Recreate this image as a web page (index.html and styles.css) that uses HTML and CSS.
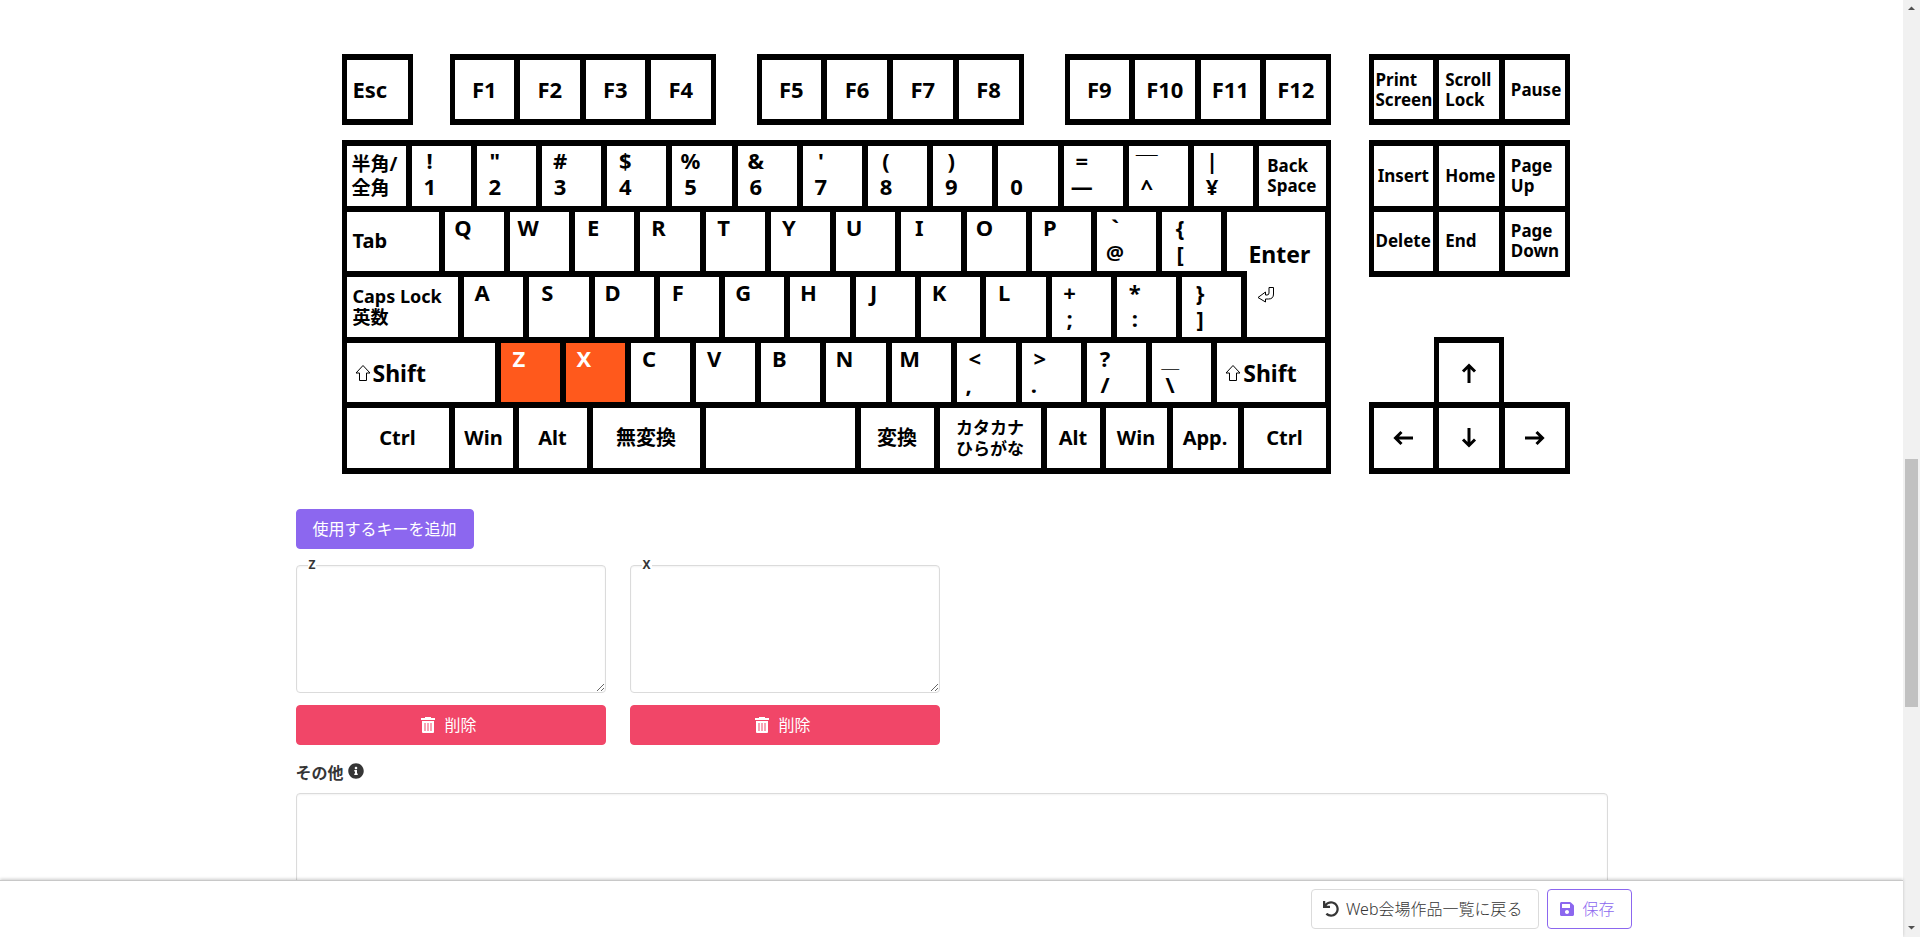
FILE: index.html
```html
<!DOCTYPE html>
<html lang="ja">
<head>
<meta charset="utf-8">
<meta name="viewport" content="width=device-width, initial-scale=1">
<title>Web会場作品</title>
<link rel="stylesheet" href="styles.css">
</head>
<body>
<div class="page">
  <main class="content">
    <section class="keyboard" aria-label="キーボード">
      <div class="function-row">
        <div class="block esc"><button class="key left large">Esc</button></div>
        <div class="block f1"><button class="key large">F1</button><button class="key large">F2</button><button class="key large">F3</button><button class="key large">F4</button></div>
        <div class="block f5"><button class="key large">F5</button><button class="key large">F6</button><button class="key large">F7</button><button class="key large">F8</button></div>
        <div class="block f9"><button class="key large">F9</button><button class="key large">F10</button><button class="key large">F11</button><button class="key large">F12</button></div>
      </div>

      <div class="block system"><button class="key left tight small">Print<br>Screen</button><button class="key left small">Scroll<br>Lock</button><button class="key left small">Pause</button></div>

      <div class="block main-keys">
        <div class="row row-digits">
          <button class="key left kanji">半角/<br>全角</button>
          <button class="key char"><span>!</span><span>1</span></button>
          <button class="key char"><span>"</span><span>2</span></button>
          <button class="key char"><span>#</span><span>3</span></button>
          <button class="key char"><span>$</span><span>4</span></button>
          <button class="key char"><span>%</span><span>5</span></button>
          <button class="key char"><span>&amp;</span><span>6</span></button>
          <button class="key char"><span>'</span><span>7</span></button>
          <button class="key char"><span>(</span><span>8</span></button>
          <button class="key char"><span>)</span><span>9</span></button>
          <button class="key char"><span></span><span>0</span></button>
          <button class="key char"><span>=</span><span>—</span></button>
          <button class="key char"><span class="macron">￣</span><span>^</span></button>
          <button class="key char"><span>|</span><span>¥</span></button>
          <button class="key left wide-pad small">Back<br>Space</button>
        </div>
        <div class="middle">
          <button class="key enter">Enter
            <svg class="return-icon" viewBox="0 0 18 18" aria-hidden="true"><path d="M12 1.500h4.500V8q0 5-5 5H8.500v3L1 11.500 8.500 6v3H10q2 0 2-2z"/></svg>
          </button>
          <div class="row row-q">
            <button class="key left">Tab</button>
            <button class="key char"><span>Q</span></button>
            <button class="key char"><span>W</span></button>
            <button class="key char"><span>E</span></button>
            <button class="key char"><span>R</span></button>
            <button class="key char"><span>T</span></button>
            <button class="key char"><span>Y</span></button>
            <button class="key char"><span>U</span></button>
            <button class="key char"><span>I</span></button>
            <button class="key char"><span>O</span></button>
            <button class="key char"><span>P</span></button>
            <button class="key char"><span>`</span><span class="at">@</span></button>
            <button class="key char"><span>{</span><span>[</span></button>
          </div>
          <div class="row row-a">
            <button class="key left caps">Caps Lock<br>英数</button>
            <button class="key char"><span>A</span></button>
            <button class="key char"><span>S</span></button>
            <button class="key char"><span>D</span></button>
            <button class="key char"><span>F</span></button>
            <button class="key char"><span>G</span></button>
            <button class="key char"><span>H</span></button>
            <button class="key char"><span>J</span></button>
            <button class="key char"><span>K</span></button>
            <button class="key char"><span>L</span></button>
            <button class="key char"><span>+</span><span>;</span></button>
            <button class="key char"><span>*</span><span>:</span></button>
            <button class="key char"><span>}</span><span>]</span></button>
          </div>
        </div>
        <div class="row row-z">
          <button class="key left shift"><svg class="shift-icon" viewBox="0 0 16 18" aria-hidden="true"><path d="M8 1.500 1 9h3.500v7.500h7V9H15z"/></svg>Shift</button>
          <button class="key char used"><span>Z</span></button>
          <button class="key char used"><span>X</span></button>
          <button class="key char"><span>C</span></button>
          <button class="key char"><span>V</span></button>
          <button class="key char"><span>B</span></button>
          <button class="key char"><span>N</span></button>
          <button class="key char"><span>M</span></button>
          <button class="key char"><span>&lt;</span><span class="low">,</span></button>
          <button class="key char"><span>&gt;</span><span class="low">.</span></button>
          <button class="key char"><span>?</span><span>/</span></button>
          <button class="key char"><span class="underscore">＿</span><span>\</span></button>
          <button class="key left shift"><svg class="shift-icon" viewBox="0 0 16 18" aria-hidden="true"><path d="M8 1.500 1 9h3.500v7.500h7V9H15z"/></svg>Shift</button>
        </div>
        <div class="row row-space">
          <button class="key">Ctrl</button>
          <button class="key">Win</button>
          <button class="key">Alt</button>
          <button class="key">無変換</button>
          <button class="key" aria-label="Space"></button>
          <button class="key">変換</button>
          <button class="key kana">カタカナ<br>ひらがな</button>
          <button class="key">Alt</button>
          <button class="key">Win</button>
          <button class="key">App.</button>
          <button class="key">Ctrl</button>
        </div>
      </div>

      <div class="navigation">
        <div class="block edit">
          <button class="key small">Insert</button><button class="key left small">Home</button><button class="key left small">Page<br>Up</button>
          <button class="key left tight small">Delete</button><button class="key left small">End</button><button class="key left small">Page<br>Down</button>
        </div>
        <div class="arrows">
          <div class="block up"><button class="key" aria-label="上"><svg class="arrow" viewBox="0 0 20 20"><path d="M10 20V3M4 8.500l6-6 6 6"/></svg></button></div>
          <div class="block sides">
            <button class="key" aria-label="左"><svg class="arrow" viewBox="0 0 20 20"><path d="M20 10H3M8.500 4l-6 6 6 6"/></svg></button>
            <button class="key" aria-label="下"><svg class="arrow" viewBox="0 0 20 20"><path d="M10 0v17M4 11.500l6 6 6-6"/></svg></button>
            <button class="key" aria-label="右"><svg class="arrow" viewBox="0 0 20 20"><path d="M0 10h17M11.500 4l6 6-6 6"/></svg></button>
          </div>
        </div>
      </div>
    </section>

    <button class="button primary">使用するキーを追加</button>

    <section class="key-fields">
      <div class="key-field">
        <label for="key-z">Z</label>
        <textarea id="key-z" class="textarea"></textarea>
        <button class="button danger"><svg class="trash" viewBox="0 0 14 16" aria-hidden="true"><path d="M4 0h6v1h4v2H0V1h4z"/><path d="M1 4h12v11a1 1 0 0 1-1 1H2a1 1 0 0 1-1-1z"/><path class="slats" d="M3 6h2v8H3zM6 6h2v8H6zM9 6h2v8H9z"/></svg>削除</button>
      </div>
      <div class="key-field">
        <label for="key-x">X</label>
        <textarea id="key-x" class="textarea"></textarea>
        <button class="button danger"><svg class="trash" viewBox="0 0 14 16" aria-hidden="true"><path d="M4 0h6v1h4v2H0V1h4z"/><path d="M1 4h12v11a1 1 0 0 1-1 1H2a1 1 0 0 1-1-1z"/><path class="slats" d="M3 6h2v8H3zM6 6h2v8H6zM9 6h2v8H9z"/></svg>削除</button>
      </div>
    </section>

    <label class="label" for="other">その他
      <svg class="icon" viewBox="0 0 512 512" aria-hidden="true"><path d="M256 8C119.043 8 8 119.083 8 256c0 136.997 111.043 248 248 248s248-111.003 248-248C504 119.083 392.957 8 256 8zm0 110c23.196 0 42 18.804 42 42s-18.804 42-42 42-42-18.804-42-42 18.804-42 42-42zm56 254c0 6.627-5.373 12-12 12h-88c-6.627 0-12-5.373-12-12v-24c0-6.627 5.373-12 12-12h12v-64h-12c-6.627 0-12-5.373-12-12v-24c0-6.627 5.373-12 12-12h64c6.627 0 12 5.373 12 12v100h12c6.627 0 12 5.373 12 12v24z"/></svg>
    </label>
    <textarea id="other" class="textarea other"></textarea>
  </main>

  <footer class="actions">
    <div class="actions-inner">
      <a class="button" href="#list"><svg class="icon" viewBox="0 0 512 512" aria-hidden="true"><path d="M212.333 224.333H12c-6.627 0-12-5.373-12-12V12C0 5.373 5.373 0 12 0h48c6.627 0 12 5.373 12 12v78.112C117.773 39.279 184.26 7.47 258.175 8.007c136.906.994 246.448 111.623 246.157 248.532C504.041 393.258 393.12 504 256.333 504c-64.089 0-122.496-24.313-166.51-64.215-5.099-4.622-5.334-12.554-.467-17.42l33.967-33.967c4.474-4.474 11.662-4.717 16.401-.525C170.76 415.336 211.58 432 256.333 432c97.268 0 176-78.716 176-176 0-97.267-78.716-176-176-176-58.496 0-110.28 28.476-142.274 72.333h98.274c6.627 0 12 5.373 12 12v48c0 6.627-5.373 12-12 12z"/></svg>Web会場作品一覧に戻る</a>
      <button class="button outlined"><svg class="icon" viewBox="-32 0 512 512" aria-hidden="true"><path d="M433.941 129.941l-83.882-83.882A48 48 0 0 0 316.118 32H48C21.490 32 0 53.490 0 80v352c0 26.510 21.490 48 48 48h352c26.510 0 48-21.490 48-48V163.882a48 48 0 0 0-14.059-33.941zM224 416c-35.346 0-64-28.654-64-64 0-35.346 28.654-64 64-64s64 28.654 64 64c0 35.346-28.654 64-64 64zm96-304.520V212c0 6.627-5.373 12-12 12H76c-6.627 0-12-5.373-12-12V108c0-6.627 5.373-12 12-12h228.520c3.183 0 6.235 1.264 8.485 3.515l3.480 3.480A11.996 11.996 0 0 1 320 111.480z"/></svg>保存</button>
    </div>
  </footer>
</div>

<div class="scrollbar" aria-hidden="true">
  <svg class="scroll-arrow" viewBox="0 0 17 17"><path d="M5 10h7L8.500 6.500z"/></svg>
  <div class="scroll-track"><div class="scroll-thumb"></div></div>
  <svg class="scroll-arrow" viewBox="0 0 17 17"><path d="M5 6h7L8.500 9.500z"/></svg>
</div>
</body>
</html>
```
FILE: styles.css
```css
* {
  box-sizing: border-box;
}

body {
  margin: 0;
  display: flex;
  height: 100vh;
  overflow: hidden;
  background: #fff;
  color: #363636;
  font: 16px/24px "Noto Sans", "Noto Sans CJK JP", sans-serif;
}

button,
textarea {
  font: inherit;
}

.page {
  flex: 1;
  min-width: 0;
  display: flex;
  flex-direction: column;
}

.content {
  flex: 1;
  min-height: 0;
  overflow: hidden;
  width: 100%;
  max-width: 1344px;
  margin: 0 auto;
  padding: 54px 16px 0;
}

/* keyboard */

.keyboard {
  display: grid;
  grid-template-columns: 989fr 201fr;
  grid-template-rows: 71px 334px;
  gap: 15px 38px;
  margin: 0 38px 35px 46px;
}

.block {
  display: grid;
  grid-auto-flow: column;
  grid-auto-columns: minmax(0, 1fr);
  gap: 6px;
  padding: 6px 5px;
  background: #000;
}

.key {
  display: flex;
  align-items: center;
  justify-content: center;
  min-width: 0;
  padding: 0;
  border: 0;
  background: #fff;
  color: #000;
  font-weight: 700;
  font-size: 20px;
  line-height: 24px;
}

.left {
  justify-content: flex-start;
  padding-left: 6px;
  text-align: left;
}

.tight {
  padding-left: 2px;
}

.wide-pad {
  padding-left: 8px;
}

.large {
  padding-bottom: 2px;
  font-size: 22px;
}

.small {
  font-size: 17px;
  line-height: 20px;
}

.caps {
  font-size: 18px;
  line-height: 21px;
}

.kanji {
  padding-left: 5px;
  font-size: 19px;
}

.kana {
  font-size: 17px;
  line-height: 21px;
}

.shift {
  padding-left: 8px;
  gap: 2px;
  font-size: 23px;
}

.char {
  flex-direction: column;
  align-items: flex-start;
  justify-content: flex-start;
  padding: 2px 0 0 6px;
  font-size: 22px;
  line-height: 26px;
}

.char span {
  width: 24px;
  height: 26px;
  text-align: center;
}

.char .at {
  font-size: 20px;
}

.char .macron {
  line-height: 36px;
}

.char .underscore {
  font-size: 18px;
  line-height: 32px;
}

.char .low {
  padding-right: 12px;
}

.used {
  background: #ff591c;
  color: #fff;
}

.function-row {
  display: grid;
  grid-template-columns: 71fr 37fr 266fr 41fr 267fr 41fr 266fr;
}

.f1 {
  grid-column: 3;
}

.f5 {
  grid-column: 5;
}

.f9 {
  grid-column: 7;
}

.main-keys {
  grid-auto-flow: row;
  grid-template-columns: minmax(0, 1fr);
  grid-template-rows: repeat(5, minmax(0, 1fr));
}

.row {
  display: grid;
  gap: 6px;
  background: #000;
}

.row-digits {
  grid-template-columns: minmax(0, 59fr) repeat(13, minmax(0, 59fr)) minmax(0, 66fr);
}

.row-digits .char {
  padding-top: 1px;
}

.middle {
  grid-row: 2 / 4;
  display: grid;
  grid-template-columns: 880fr 20fr 78fr;
  grid-template-rows: calc(50% - 3px) 1fr;
}

.row-q {
  grid-area: 1 / 1 / 2 / 2;
  grid-template-columns: minmax(0, 92fr) repeat(12, minmax(0, 59fr));
  padding-right: 6px;
}

.row-a {
  grid-area: 2 / 1 / 3 / 3;
  grid-template-columns: minmax(0, 111fr) repeat(12, minmax(0, 59fr));
  padding: 6px 6px 0 0;
}

.enter {
  grid-area: 1 / 2 / 3 / 4;
  flex-direction: column;
  align-items: flex-start;
  justify-content: flex-start;
  gap: 20px;
  padding: 30px 0 0 21px;
  font-size: 23px;
}

.row-z {
  grid-template-columns: minmax(0, 148fr) repeat(11, minmax(0, 59fr)) minmax(0, 108fr);
}

.row-space {
  grid-template-columns: 102fr 58fr 68fr 107fr 149fr 73fr 101fr 53fr 61fr 65fr 82fr;
}

.return-icon,
.shift-icon {
  flex: none;
  width: 16px;
  height: 18px;
  fill: none;
  stroke: #000;
}

.return-icon {
  width: 18px;
  margin-left: 9px;
}

.navigation {
  display: flex;
  flex-direction: column;
  justify-content: space-between;
}

.edit,
.arrows {
  height: calc((100% - 36px) / 5 * 2 + 18px);
}

.edit {
  grid-auto-flow: row;
  grid-template-columns: repeat(3, minmax(0, 1fr));
  grid-template-rows: 1fr 1fr;
}

.arrows {
  display: grid;
  grid-template-rows: calc(50% - 3px) 1fr;
  justify-items: center;
}

.up {
  width: calc((100% - 22px) / 3 + 10px);
  padding-bottom: 0;
}

.sides {
  width: 100%;
}

.arrow {
  width: 20px;
  height: 20px;
  fill: none;
  stroke: #000;
  stroke-width: 3;
}

/* form controls */

.button {
  display: inline-flex;
  align-items: center;
  justify-content: center;
  gap: 8px;
  height: 40px;
  padding: 0 16px;
  border: 1px solid #dbdbdb;
  border-radius: 4px;
  background: #fff;
  color: #363636;
  text-decoration: none;
  white-space: nowrap;
}

.primary {
  border-color: #8c67ef;
  background: #8c67ef;
  color: #fff;
}

.danger {
  width: 100%;
  padding-right: 19px;
  border-color: #f14668;
  background: #f14668;
  color: #fff;
}

.outlined {
  border-color: #8c67ef;
  color: #8c67ef;
}

.icon {
  width: 16px;
  height: 16px;
  fill: currentColor;
}

.label .icon {
  margin-bottom: 4px;
}

.trash {
  width: 14px;
  height: 16px;
  margin-right: 1px;
  fill: #fff;
}

.slats {
  fill: #f8a3b4;
}

.key-fields {
  display: grid;
  grid-template-columns: repeat(4, minmax(0, 1fr));
  gap: 24px;
  margin-top: 16px;
}

.key-field {
  position: relative;
}

.key-field label {
  position: absolute;
  top: -6px;
  left: 12px;
  padding: 0 1px;
  background: #fff;
  font-size: 12px;
  line-height: 12px;
  font-weight: 700;
}

.textarea {
  display: block;
  width: 100%;
  height: 128px;
  margin-bottom: 12px;
  border: 1px solid #dbdbdb;
  border-radius: 4px;
  background: #fff;
  box-shadow: inset 0 1px 2px rgba(10, 10, 10, 0.05);
  resize: vertical;
}

.label {
  display: flex;
  align-items: center;
  gap: 4px;
  margin: 16px 0 8px;
  font-weight: 700;
}

.actions {
  position: relative;
  padding: 8px 0;
  background: #fff;
  border-top: 1px solid #c8c8c8;
  box-shadow: 0 -1px 3px rgba(0, 0, 0, 0.2);
}

.actions-inner {
  display: flex;
  justify-content: flex-end;
  gap: 8px;
  max-width: 1360px;
  margin: 0 auto;
}

.actions .button {
  padding: 0 16px 0 11px;
  gap: 7px;
  font-weight: 300;
}

/* scrollbar */

.scrollbar {
  display: flex;
  flex-direction: column;
  width: 17px;
  background: #f1f1f1;
}

.scroll-arrow {
  width: 17px;
  height: 17px;
  fill: #505050;
}

.scroll-track {
  flex: 1;
  display: grid;
  grid-template-rows: 442fr 248fr 213fr;
  padding: 0 2px;
}

.scroll-thumb {
  grid-row: 2;
  background: #c1c1c1;
}
```
